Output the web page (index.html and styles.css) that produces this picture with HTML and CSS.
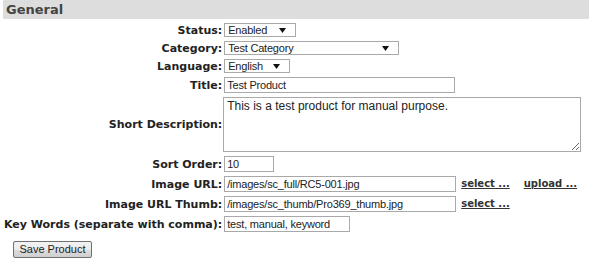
FILE: index.html
```html
<!DOCTYPE html>
<html lang="en">
<head>
    <meta charset="UTF-8">
    <title>Edit Product</title>
    <link rel="stylesheet" href="styles.css">
</head>
<body>
    <div class="panel">
        <h2 class="panel-title">General</h2>
        <form method="POST" id="productForm">
            <table class="form-table">
                <tr>
                    <td class="label">Status:</td>
                    <td><select class="field sel-status"><option>Enabled</option><option>Disabled</option></select></td>
                </tr>
                <tr>
                    <td class="label">Category:</td>
                    <td><select class="field sel-category"><option>Test Category</option></select></td>
                </tr>
                <tr>
                    <td class="label">Language:</td>
                    <td><select class="field sel-language"><option>English</option></select></td>
                </tr>
                <tr>
                    <td class="label">Title:</td>
                    <td><input type="text" class="field in-title" value="Test Product"></td>
                </tr>
                <tr>
                    <td class="label">Short Description:</td>
                    <td><textarea class="field in-desc">This is a test product for manual purpose.</textarea></td>
                </tr>
                <tr>
                    <td class="label">Sort Order:</td>
                    <td><input type="text" class="field in-sort" value="10"></td>
                </tr>
                <tr>
                    <td class="label">Image URL:</td>
                    <td class="with-links">
                        <input type="text" class="field in-url" value="/images/sc_full/RC5-001.jpg">
                        <a href="#" class="action-link">select ...</a>
                        <a href="#" class="action-link">upload ...</a>
                    </td>
                </tr>
                <tr>
                    <td class="label">Image URL Thumb:</td>
                    <td class="with-links">
                        <input type="text" class="field in-url" value="/images/sc_thumb/Pro369_thumb.jpg">
                        <a href="#" class="action-link">select ...</a>
                    </td>
                </tr>
                <tr>
                    <td class="label">Key Words (separate with comma):</td>
                    <td><input type="text" class="field in-keywords" value="test, manual, keyword"></td>
                </tr>
            </table>
            <div class="actions">
                <button type="submit" class="btn">Save Product</button>
            </div>
        </form>
    </div>
</body>
</html>
```

FILE: styles.css
```css
body {
    margin: 0;
    background-color: #fff;
    color: #222;
    font-family: "DejaVu Sans", Verdana, sans-serif;
}
.panel {
    padding: 0 0 0 3px;
}
.panel-title {
    margin: 0;
    height: 19px;
    line-height: 20px;
    padding-left: 3px;
    background-color: #dddddd;
    color: #444;
    font-size: 13px;
    font-weight: bold;
}
.form-table {
    border-collapse: collapse;
    margin-top: 2px;
}
.form-table td {
    padding: 2px 0;
    vertical-align: middle;
}
.form-table .label {
    text-align: right;
    font-size: 11px;
    line-height: 13px;
    font-weight: bold;
    padding-right: 2px;
    padding-left: 1px;
    white-space: nowrap;
}
.field {
    box-sizing: border-box;
    margin: 0;
    border: 1px solid #a9a9a9;
    background-color: #fff;
    color: #222;
    font-family: "Liberation Sans", Arial, sans-serif;
    font-size: 11px;
    letter-spacing: -0.2px;
    display: block;
}
select.field {
    -webkit-appearance: none;
    appearance: none;
    height: 14px;
    padding: 0 0 0 3px;
    line-height: 12px;
    border-radius: 0;
    background-image: url("data:image/svg+xml,%3Csvg xmlns='http://www.w3.org/2000/svg' width='7' height='5'%3E%3Cpath d='M0 0h7L3.5 5z' fill='%23111'/%3E%3C/svg%3E");
    background-repeat: no-repeat;
    background-position: right 9px center;
}
.sel-status { width: 72px; }
.sel-category { width: 175px; }
.sel-language { width: 66px; }
input.field {
    height: 16px;
    line-height: 14px;
    padding: 0 2px;
}
.in-title { width: 231px; }
.in-sort { width: 50px; }
.in-url { width: 232px; }
.in-keywords { width: 126px; }
textarea.field {
    width: 358px;
    height: 55px;
    padding: 1px 3px;
    resize: vertical;
    font-size: 12px;
    letter-spacing: 0;
    margin-left: -1px;
}
.with-links {
    display: flex;
    align-items: center;
    white-space: nowrap;
    line-height: 12px;
}
.action-link {
    color: #333;
    font-size: 10px;
    font-weight: bold;
    margin-left: 5px;
    margin-right: 9px;
}
.actions {
    padding: 4px 0 0 10px;
}
.btn {
    font-family: "Liberation Sans", Arial, sans-serif;
    font-size: 11px;
    color: #222;
    height: 17px;
    width: 79px;
    padding: 0;
    line-height: 15px;
    border: 1px solid #707070;
    border-radius: 2px;
    background: linear-gradient(#f2f2f2, #ebebeb 50%, #dddddd 50%, #cfcfcf);
    cursor: pointer;
}
```
